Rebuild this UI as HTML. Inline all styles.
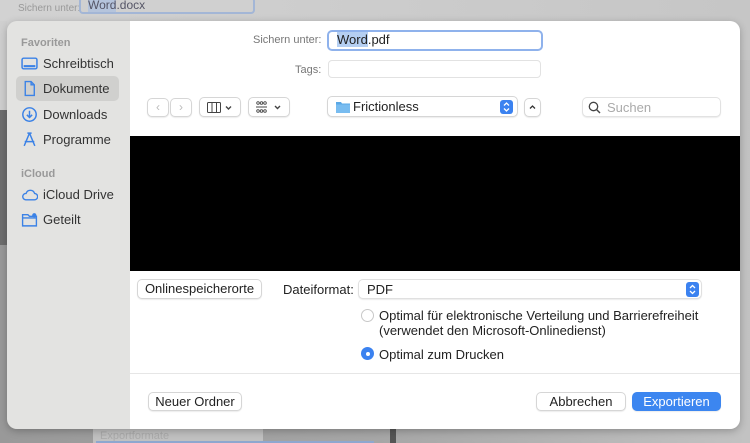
<!DOCTYPE html>
<html><head><meta charset="utf-8">
<style>
*{box-sizing:border-box;margin:0;padding:0}
body{width:750px;height:443px;overflow:hidden;position:relative;font-family:"Liberation Sans",sans-serif;background:linear-gradient(90deg,#999 0%,#a6a6a6 50%,#c2c2c2 100%);font-size:13px;color:#222}
.abs{position:absolute}
.btn{position:absolute;background:#fff;border:1px solid #d6d6d6;border-radius:5px;box-shadow:0 1px 1px rgba(0,0,0,.08);font-size:13px;color:#222;text-align:center}
.side{left:7px;top:21px;width:123px;height:408px;background:#e3e3e1;border-radius:10px 0 0 10px}
.main{left:130px;top:21px;width:610px;height:408px;background:#fff;border-radius:0 10px 10px 0}
.si{position:absolute;left:22px;font-size:13px;color:#333}
.si svg{position:absolute;left:-1px;top:-1px}
.si span{position:absolute;left:21px;top:0;white-space:nowrap}
.hd{position:absolute;left:21px;font-size:11px;color:#999;font-weight:bold}
</style></head><body>
<div class="abs" style="left:0;top:0;width:750px;height:60px;background:linear-gradient(90deg,#d2d2d2,#c6c6c6)"></div>
<div class="abs" style="left:0;top:21px;width:7px;height:90px;background:#cfcfcf"></div>
<div class="abs" style="left:0;top:110px;width:7px;height:135px;background:#6e6e6e"></div>
<div class="abs" style="left:18px;top:3px;font-size:10px;color:#999">Sichern unter:</div>
<div class="abs" style="left:79px;top:-3px;width:176px;height:17px;border:2px solid #a3b6d6;border-radius:4px;background:#d0d0d0;font-size:12px;color:#556;padding-left:7px;line-height:13px"><span style="background:#b5c4dc">Word</span>.docx</div>
<div class="abs" style="left:93px;top:429px;width:170px;height:14px;background:#c0c0c0"></div>
<div class="abs" style="left:100px;top:430px;font-size:11px;color:#aaa">Exportformate</div>
<div class="abs" style="left:96px;top:441px;width:278px;height:2px;background:#8ea7cf"></div>
<div class="abs" style="left:390px;top:429px;width:6px;height:14px;background:#555"></div>

<div class="abs" style="left:7px;top:21px;width:733px;height:408px;border-radius:10px;box-shadow:0 2px 8px rgba(0,0,0,.25)"></div>
<div class="abs side"></div>
<div class="abs main"></div>

<div class="hd" style="top:37px">Favoriten</div>
<div class="abs" style="left:16px;top:76px;width:103px;height:25px;background:#d0d0ce;border-radius:5px"></div>
<div class="si" style="top:56px"><svg width="17" height="17" viewBox="0 0 16 16"><rect x="1" y="3" width="14" height="10" rx="1.5" fill="none" stroke="#3b82e6" stroke-width="1.4"/><rect x="2.5" y="9.5" width="11" height="2" fill="#3b82e6"/></svg><span>Schreibtisch</span></div>
<div class="si" style="top:81px"><svg width="17" height="17" viewBox="0 0 16 16"><path d="M4 1.5h5.5l3 3v10h-8.5z M9.5 1.5v3h3" fill="none" stroke="#3b82e6" stroke-width="1.3"/></svg><span>Dokumente</span></div>
<div class="si" style="top:107px"><svg width="17" height="17" viewBox="0 0 16 16"><circle cx="8" cy="8" r="6.3" fill="none" stroke="#3b82e6" stroke-width="1.4"/><path d="M8 4.5v6M5.5 8.3l2.5 2.5 2.5-2.5" fill="none" stroke="#3b82e6" stroke-width="1.4"/></svg><span>Downloads</span></div>
<div class="si" style="top:132px"><svg width="17" height="17" viewBox="0 0 16 16"><path d="M8 2l-5 12M8 2l5 12M3.5 10h9M6 2h4" fill="none" stroke="#3b82e6" stroke-width="1.4"/></svg><span>Programme</span></div>
<div class="hd" style="top:168px">iCloud</div>
<div class="si" style="top:187px"><svg width="17" height="17" viewBox="0 0 16 16"><path d="M4.5 13h8a3 3 0 0 0 .3-6A4.2 4.2 0 0 0 4.8 7 3 3 0 0 0 4.5 13z" fill="none" stroke="#3b82e6" stroke-width="1.3"/></svg><span>iCloud Drive</span></div>
<div class="si" style="top:212px"><svg width="17" height="17" viewBox="0 0 16 16"><path d="M1.5 3.5h5l1.5 1.5h6.5v9h-13z M1.5 6.5h13" fill="none" stroke="#3b82e6" stroke-width="1.3"/><circle cx="12.5" cy="4" r="2" fill="#3b82e6"/></svg><span>Geteilt</span></div>

<div class="abs" style="left:253px;top:34px;font-size:11px;color:#777">Sichern unter:</div>
<div class="abs" style="left:327px;top:30px;width:216px;height:21px;border:2.5px solid #8fb2ec;border-radius:5px;background:#fff;font-size:13px;color:#222;padding-left:8px;line-height:16px"><span style="background:#b5cff2">Word</span>.pdf</div>
<div class="abs" style="left:295px;top:64px;font-size:11px;color:#777">Tags:</div>
<div class="abs" style="left:328px;top:60px;width:213px;height:18px;border:1px solid #e2e2e2;border-radius:4px;background:#fff"></div>

<div class="btn" style="left:147px;top:98px;width:22px;height:19px;color:#bbb;line-height:17px;font-size:12px">&#x2039;</div>
<div class="btn" style="left:170px;top:98px;width:22px;height:19px;color:#bbb;line-height:17px;font-size:12px">&#x203A;</div>
<div class="btn" style="left:199px;top:97px;width:42px;height:20px"><svg class="abs" style="left:7px;top:4px" width="28" height="12" viewBox="0 0 28 12"><rect x="0.5" y="0.5" width="13" height="10" rx="1" fill="none" stroke="#444"/><path d="M5 1v10M9.5 1v10" stroke="#444"/><path d="M19 4.5l2.5 2.5 2.5-2.5" fill="none" stroke="#444" stroke-width="1.4"/></svg></div>
<div class="btn" style="left:248px;top:97px;width:42px;height:20px"><svg class="abs" style="left:7px;top:3px" width="28" height="13" viewBox="0 0 28 13"><g fill="none" stroke="#444" stroke-width="0.9"><circle cx="2" cy="2" r="1.3"/><circle cx="5.5" cy="2" r="1.3"/><circle cx="9" cy="2" r="1.3"/><circle cx="2" cy="10" r="1.3"/><circle cx="5.5" cy="10" r="1.3"/><circle cx="9" cy="10" r="1.3"/></g><path d="M0 6h11" stroke="#444"/><path d="M19 5l2.5 2.5 2.5-2.5" fill="none" stroke="#444" stroke-width="1.4"/></svg></div>

<div class="btn" style="left:327px;top:96px;width:191px;height:21px;text-align:left"><svg class="abs" style="left:8px;top:4px" width="14" height="12" viewBox="0 0 14 12"><path d="M0 1h5l1 1.5h8V12H0z" fill="#5aa8e6"/><path d="M0 3.5h14V12H0z" fill="#78bcf0"/></svg><span class="abs" style="left:25px;top:2px">Frictionless</span><div class="abs" style="right:4px;top:3px;width:13px;height:14px;background:#3b82f0;border-radius:3px"><svg width="13" height="14" viewBox="0 0 13 14"><path d="M4 5.5l2.5-2.5 2.5 2.5M4 8.5l2.5 2.5 2.5-2.5" fill="none" stroke="#fff" stroke-width="1.3"/></svg></div></div>
<div class="btn" style="left:524px;top:98px;width:17px;height:19px"><svg width="15" height="17" viewBox="0 0 15 17"><path d="M5 9.5l2.5-2.5 2.5 2.5" fill="none" stroke="#333" stroke-width="1.3"/></svg></div>
<div class="btn" style="left:582px;top:97px;width:139px;height:20px;text-align:left;border-color:#e2e2e2"><svg class="abs" style="left:5px;top:3px" width="13" height="13" viewBox="0 0 13 13"><circle cx="5.5" cy="5.5" r="4.2" fill="none" stroke="#444" stroke-width="1.3"/><path d="M8.5 8.5l3.5 3.5" stroke="#444" stroke-width="1.4"/></svg><span class="abs" style="left:24px;top:2px;color:#aaa">Suchen</span></div>

<div class="abs" style="left:130px;top:136px;width:610px;height:135px;background:#000"></div>

<div class="btn" style="left:137px;top:279px;width:125px;height:20px;line-height:18px">Onlinespeicherorte</div>
<div class="abs" style="left:283px;top:282px">Dateiformat:</div>
<div class="btn" style="left:358px;top:279px;width:344px;height:20px;text-align:left;border-color:#e0e0e0"><span class="abs" style="left:8px;top:2px">PDF</span><div class="abs" style="right:2px;top:2px;width:13px;height:15px;background:#3b82f0;border-radius:3px"><svg width="13" height="15" viewBox="0 0 13 15"><path d="M4 6l2.5-2.5 2.5 2.5M4 9l2.5 2.5 2.5-2.5" fill="none" stroke="#fff" stroke-width="1.3"/></svg></div></div>
<div class="abs" style="left:361px;top:309px;width:13px;height:13px;border:1px solid #c8c8c8;border-radius:50%;background:#fff"></div>
<div class="abs" style="left:379px;top:308px;line-height:15px">Optimal für elektronische Verteilung und Barrierefreiheit<br>(verwendet den Microsoft-Onlinedienst)</div>
<div class="abs" style="left:361px;top:347px;width:13px;height:13px;border-radius:50%;background:#3b82f0"><div class="abs" style="left:4.5px;top:4.5px;width:4px;height:4px;background:#fff;border-radius:50%"></div></div>
<div class="abs" style="left:379px;top:347px">Optimal zum Drucken</div>

<div class="abs" style="left:130px;top:373px;width:610px;height:1px;background:#e6e6e6"></div>
<div class="btn" style="left:148px;top:392px;width:94px;height:19px;line-height:17px">Neuer Ordner</div>
<div class="btn" style="left:536px;top:392px;width:90px;height:19px;line-height:17px">Abbrechen</div>
<div class="btn" style="left:632px;top:392px;width:89px;height:19px;line-height:17px;background:#3c86f0;border-color:#3c86f0;color:#fff">Exportieren</div>
</body></html>
